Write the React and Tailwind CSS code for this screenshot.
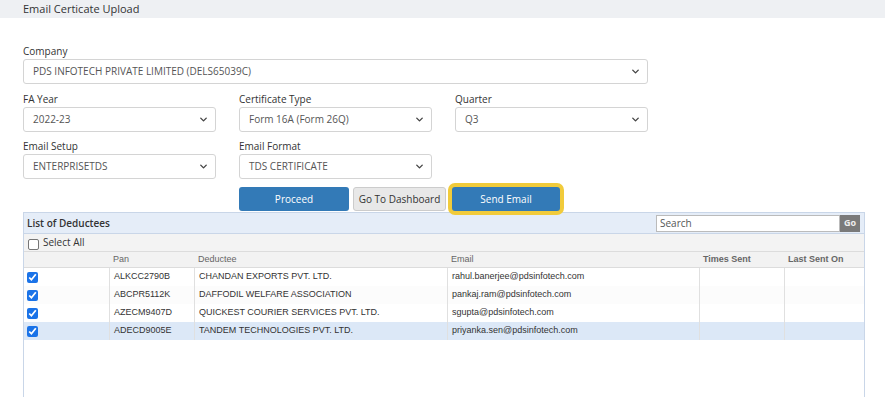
import { ChevronDown } from 'lucide-react';

const rows = [
  { pan: 'ALKCC2790B', name: 'CHANDAN EXPORTS PVT. LTD.', email: 'rahul.banerjee@pdsinfotech.com' },
  { pan: 'ABCPR5112K', name: 'DAFFODIL WELFARE ASSOCIATION', email: 'pankaj.ram@pdsinfotech.com' },
  { pan: 'AZECM9407D', name: 'QUICKEST COURIER SERVICES PVT. LTD.', email: 'sgupta@pdsinfotech.com' },
  { pan: 'ADECD9005E', name: 'TANDEM TECHNOLOGIES PVT. LTD.', email: 'priyanka.sen@pdsinfotech.com', selected: true },
];

function Field({ label, value, className = '' }) {
  return (
    <div className={className}>
      <div className="h-[12px] text-[10px] leading-[12px] text-[#333]">{label}</div>
      <div className="mt-[2px] flex h-[25px] items-center justify-between rounded-[3px] border border-[#d4d4d4] bg-white pl-[9px] pr-[6px] text-[10px] text-[#555]">
        <span>{value}</span>
        <ChevronDown className="h-[11px] w-[11px] text-[#444]" strokeWidth={3} />
      </div>
    </div>
  );
}

export default function App() {
  return (
    <div
      className="h-[397px] w-[885px] overflow-hidden bg-white"
      style={{ fontFamily: '"Open Sans", "Noto Sans", sans-serif' }}
    >
      <div className="flex h-[18px] items-center bg-[#eef0f3] pl-[23px] text-[11px] text-[#333]">
        Email Certicate Upload
      </div>

      <div className="px-[23px] pt-[27px]">
        <div className="w-[625px]">
          <Field label="Company" value="PDS INFOTECH PRIVATE LIMITED (DELS65039C)" />
          <div className="mt-[9px] grid grid-cols-3 gap-x-[23px] gap-y-[8px]">
            <Field label="FA Year" value="2022-23" />
            <Field label="Certificate Type" value="Form 16A (Form 26Q)" />
            <Field label="Quarter" value="Q3" />
            <Field label="Email Setup" value="ENTERPRISETDS" />
            <Field label="Email Format" value="TDS CERTIFICATE" />
          </div>
        </div>

        <div className="mt-[8px] flex h-[24px] items-stretch pl-[216px] text-[10px]">
          <button className="w-[110px] rounded-[3px] bg-[#337ab7] text-white">Proceed</button>
          <button className="ml-[4px] w-[93px] rounded-[3px] border border-[#ccc] bg-[#e8e8e8] text-[#333]">
            Go To Dashboard
          </button>
          <button className="relative z-10 ml-[6px] w-[108px] rounded-[3px] bg-[#337ab7] text-white ring-[4px] ring-[#f1cb3b]">
            Send Email
          </button>
        </div>

        <div className="mt-[1px] h-[200px] w-[842px] border-x border-[#c9d6e8]">
          <div className="flex h-[22px] items-center justify-between border-y border-[#c9d6e8] bg-[#e5edf8] pl-[3px] pr-[4px]">
            <span className="text-[10px] font-semibold text-[#333]">List of Deductees</span>
            <div className="flex h-[17px] items-stretch">
              <div className="flex w-[184px] items-center border border-[#bbb] bg-white pl-[3px] text-[10px] text-[#555]">
                Search
              </div>
              <div className="flex w-[20px] items-center justify-center bg-[#7a7a7a] text-[9px] font-bold text-[#eee]">
                Go
              </div>
            </div>
          </div>

          <div className="flex h-[17px] items-center gap-[4px] bg-[#f3f3f3] pl-[4px] text-[10px] text-[#333]">
            <span className="mt-[3px] h-[11px] w-[11px] rounded-[2px] border border-[#767676] bg-white" />
            <span>Select All</span>
          </div>

          <div style={{ fontFamily: '"Liberation Sans", Arial, sans-serif' }}>
            <div className="grid h-[17px] grid-cols-[85px_85px_253px_252px_85px_1fr] items-center border-y border-[#dcdcdc] bg-[#f2f2f2] text-[9px] text-[#666]">
              <div />
              <div className="pl-[4px]">Pan</div>
              <div className="pl-[4px]">Deductee</div>
              <div className="pl-[4px]">Email</div>
              <div className="pl-[4px] font-bold">Times Sent</div>
              <div className="pl-[4px] font-bold">Last Sent On</div>
            </div>
            {rows.map((r, i) => (
              <div
                key={r.pan}
                className={`grid h-[18px] grid-cols-[85px_85px_253px_252px_85px_1fr] text-[9px] text-[#333] ${
                  r.selected ? 'bg-[#dce8f7]' : i % 2 ? 'bg-[#fcfcfc]' : 'bg-white'
                }`}
              >
                <div className="flex items-center pl-[3px]">
                  <input type="checkbox" defaultChecked className="m-0 h-[11px] w-[11px] accent-[#1a73e8]" />
                </div>
                <div className="flex items-center border-l border-[#e0e0e0] pl-[4px]">{r.pan}</div>
                <div className="flex items-center border-l border-[#e0e0e0] pl-[4px]">{r.name}</div>
                <div className="flex items-center border-l border-[#e0e0e0] pl-[4px]">{r.email}</div>
                <div className="border-l border-[#e0e0e0]" />
                <div className="border-l border-[#e0e0e0]" />
              </div>
            ))}
          </div>
        </div>
      </div>
    </div>
  );
}
